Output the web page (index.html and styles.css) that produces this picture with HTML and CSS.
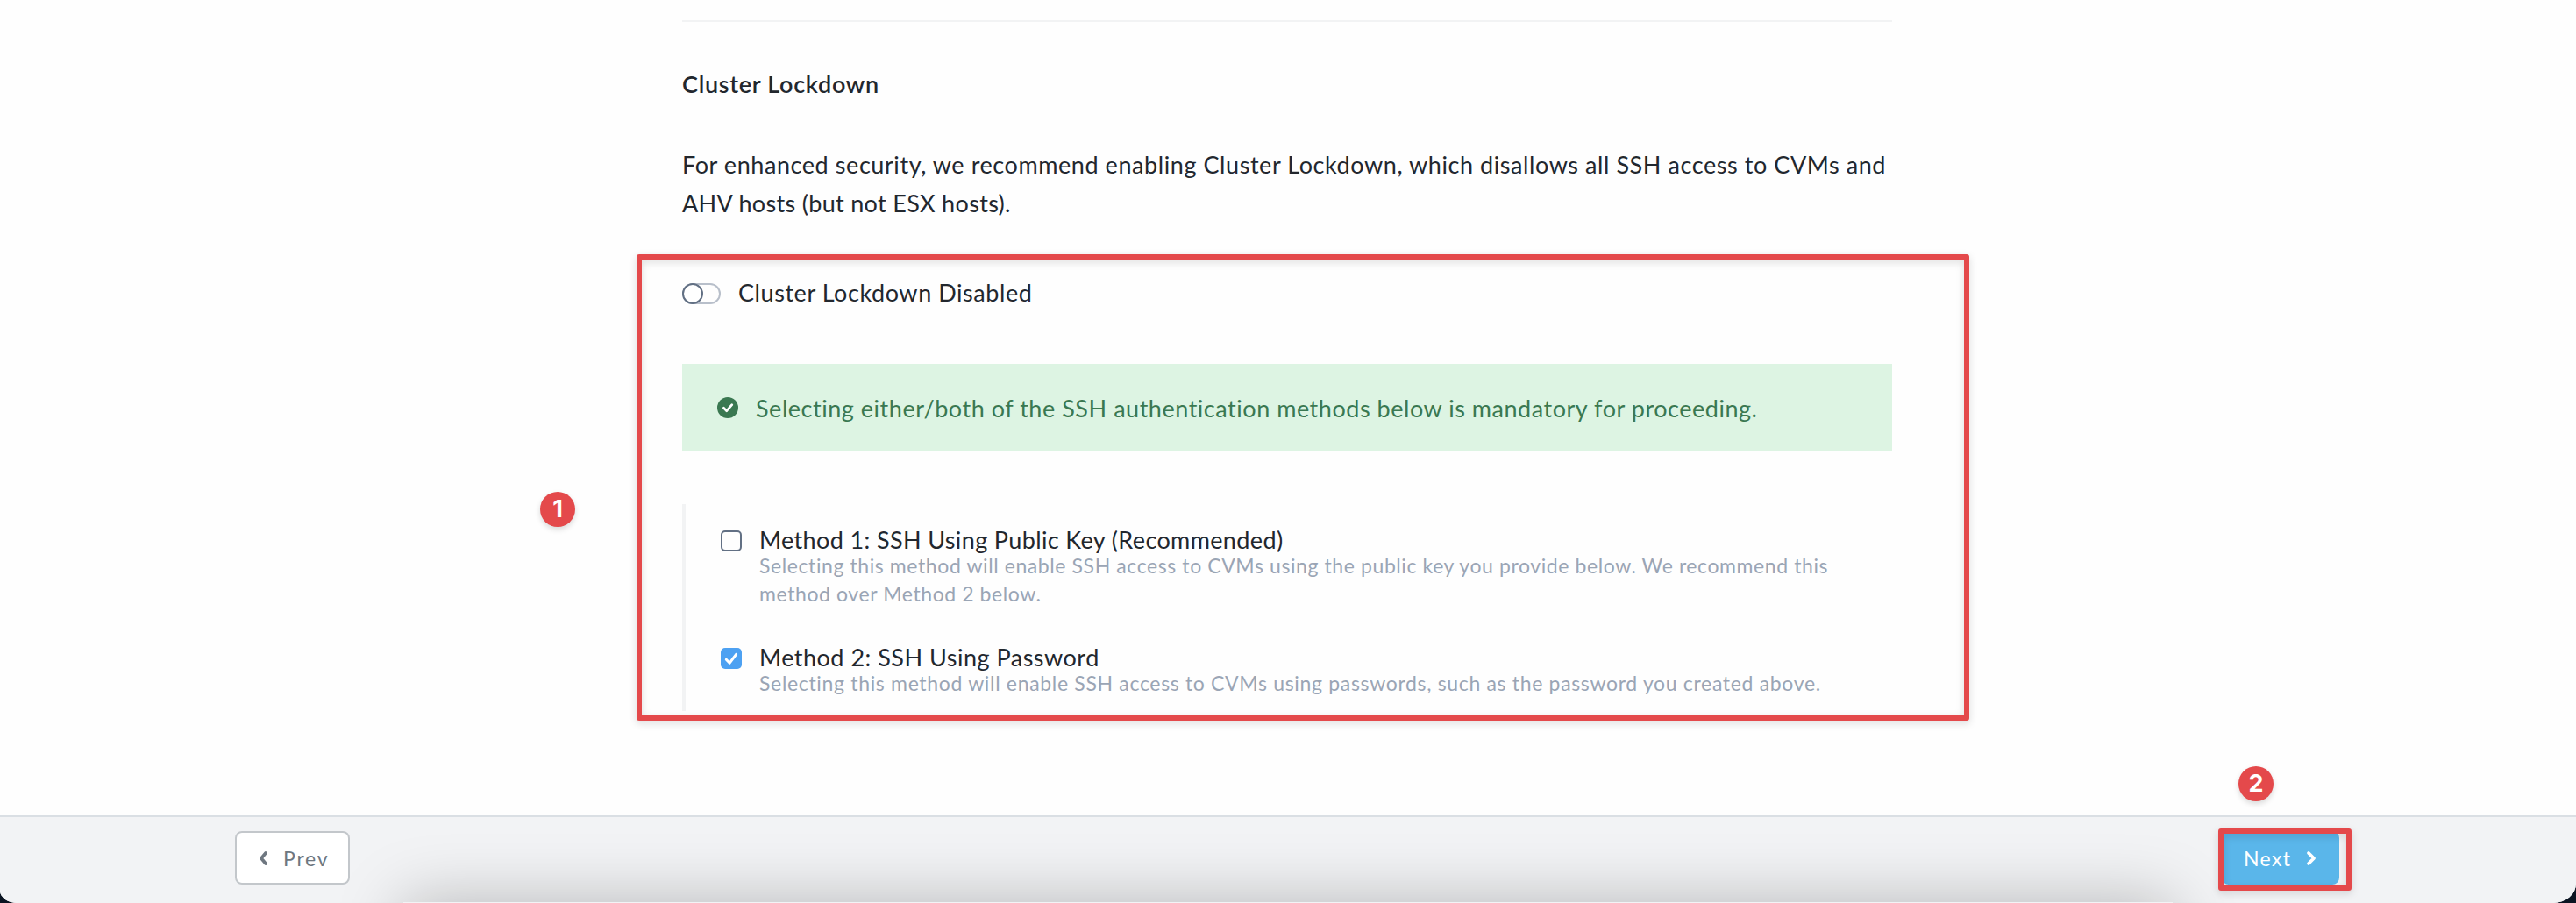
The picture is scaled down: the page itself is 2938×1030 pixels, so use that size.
FILE: index.html
```html
<!DOCTYPE html>
<html lang="en">
<head>
<meta charset="utf-8">
<title>Cluster Lockdown</title>
<link rel="stylesheet" href="styles.css">
</head>
<body>
<div class="window">
  <main class="content">
    <hr class="divider">
    <h2 class="title">Cluster Lockdown</h2>
    <p class="intro"><span>For enhanced security, we recommend enabling Cluster Lockdown, which disallows all SSH access to CVMs and</span><br><span class="intro-end">AHV hosts (but not ESX hosts).</span></p>
    <div class="toggle-row">
      <span class="toggle"><span class="knob"></span></span>
      <span class="toggle-label">Cluster Lockdown Disabled</span>
    </div>
    <div class="banner">
      <svg class="banner-icon" viewBox="0 0 24 24"><circle cx="12" cy="12" r="12" fill="#3a7851"/><path d="M7.4 12.2l3.4 3.5 6-7" fill="none" stroke="#fff" stroke-width="2.7" stroke-linecap="round" stroke-linejoin="round"/></svg>
      <span class="banner-text">Selecting either/both of the SSH authentication methods below is mandatory for proceeding.</span>
    </div>
    <div class="methods">
      <div class="method">
        <span class="checkbox"></span>
        <div class="method-body">
          <div class="method-title">Method 1: SSH Using Public Key (Recommended)</div>
          <div class="method-note">Selecting this method will enable SSH access to CVMs using the public key you provide below. We recommend this<br>method over Method 2 below.</div>
        </div>
      </div>
      <div class="method">
        <span class="checkbox checked"><svg viewBox="0 0 24 24"><path d="M6.3 13.2l3.9 4 7.4-9.9" fill="none" stroke="#fff" stroke-width="3" stroke-linecap="round" stroke-linejoin="round"/></svg></span>
        <div class="method-body">
          <div class="method-title title-wide">Method 2: SSH Using Password</div>
          <div class="method-note note-wide">Selecting this method will enable SSH access to CVMs using passwords, such as the password you created above.</div>
        </div>
      </div>
    </div>
  </main>
  <footer class="footer">
    <div class="button prev"><svg class="chevron" viewBox="0 0 12 18"><path d="M9 3L4 9l5 6" fill="none" stroke="currentColor" stroke-width="3.6" stroke-linecap="round" stroke-linejoin="round"/></svg><span class="prev-text">Prev</span></div>
    <div class="button next"><span class="next-text">Next</span><svg class="chevron" viewBox="0 0 12 18"><path d="M3 3l6 6-6 6" fill="none" stroke="currentColor" stroke-width="3.8" stroke-linecap="round" stroke-linejoin="round"/></svg></div>
  </footer>
</div>
<div class="mark mark-methods"></div>
<div class="mark mark-next"></div>
<div class="badge badge-one">1</div>
<div class="badge badge-two">2</div>
</body>
</html>
```
FILE: styles.css
```css
* { box-sizing: border-box; }

body {
  margin: 0;
  position: relative;
  height: 1030px;
  overflow: hidden;
  background: #0b1422;
  color: #22272e;
  font: 400 27px/44px Lato, sans-serif;
  font-variant-ligatures: none;
}

.window {
  display: flex;
  flex-direction: column;
  height: 1030px;
  overflow: hidden;
  background: #fefefe;
  border-radius: 0 0 26px 20px / 0 0 22px 14px;
}

.content {
  flex: 1;
  width: 1380px;
  margin-left: 778px;
  padding-top: 23px;
}

.divider {
  height: 2px;
  margin: 0;
  border: 0;
  background: #f2f3f4;
}

.title {
  margin: 49px 0 0;
  font-size: 27px;
  font-weight: 600;
  letter-spacing: 0.7px;
}

.intro {
  margin: 48px 0 0;
  white-space: nowrap;
  letter-spacing: 0.57px;
}

.intro-end { letter-spacing: 0.32px; }

.toggle-row {
  display: flex;
  align-items: center;
  gap: 20px;
  margin-top: 58px;
  letter-spacing: 0.56px;
}

.toggle {
  width: 44px;
  height: 24px;
  margin-top: 2px;
  border: 2px solid #b8bfca;
  border-radius: 12px;
}

.knob {
  display: block;
  width: 24px;
  height: 24px;
  margin: -2px;
  border: 2px solid #627084;
  border-radius: 50%;
  background: #fff;
}

.banner {
  display: flex;
  align-items: center;
  gap: 20px;
  height: 100px;
  margin-top: 59px;
  padding: 2px 0 0 40px;
  background: #ddf4e3;
  color: #3a7851;
  white-space: nowrap;
  letter-spacing: 0.53px;
}

.banner-icon {
  width: 24px;
  height: 24px;
  margin-top: -2px;
}

.methods {
  display: flex;
  flex-direction: column;
  gap: 44px;
  height: 236px;
  margin-top: 60px;
  padding: 28px 0 0 40px;
  border-left: 4px solid #f2f3f4;
}

.method {
  display: flex;
  gap: 20px;
}

.checkbox {
  width: 24px;
  height: 24px;
  margin-top: 2px;
  border: 2px solid #627084;
  border-radius: 5px;
}

.checkbox.checked {
  border: 0;
  background: #4da1f2;
}

.checkbox svg { display: block; }

.method-title {
  line-height: 26px;
  letter-spacing: 0.37px;
}

.title-wide { letter-spacing: 0.5px; }

.method-note {
  color: #9aa5b5;
  font-size: 23px;
  line-height: 32px;
  white-space: nowrap;
  letter-spacing: 0.59px;
}

.note-wide { letter-spacing: 0.67px; }

.footer {
  position: relative;
  display: flex;
  justify-content: space-between;
  height: 100px;
  padding: 16px 270px 0 268px;
  border-top: 2px solid #dadfe4;
  background: #f2f3f5;
  overflow: hidden;
}

.footer::after {
  content: "";
  position: absolute;
  top: 97px;
  left: 460px;
  right: 460px;
  height: 120px;
  box-shadow: 0 0 75px rgba(0, 0, 0, 0.25);
}

.button {
  display: flex;
  align-items: center;
  height: 61px;
  border-radius: 8px;
  font-size: 23px;
}

.prev {
  width: 131px;
  padding-left: 24px;
  gap: 17px;
  border: 2px solid #c3c7cb;
  background: #fff;
  color: #6e7780;
}

.next {
  width: 134px;
  padding-left: 25px;
  gap: 16px;
  background: #5ab6ea;
  color: #fff;
}

.prev-text { letter-spacing: 1.8px; }

.next-text { letter-spacing: 1.4px; }

.chevron {
  width: 12px;
  height: 18px;
}

.mark {
  position: absolute;
  border: 6px solid #e4494b;
  border-radius: 3px;
  filter: drop-shadow(0 3px 4px rgba(0, 0, 0, 0.15));
}

.mark-methods {
  left: 726px;
  top: 290px;
  width: 1520px;
  height: 532px;
}

.mark-next {
  left: 2530px;
  top: 945px;
  width: 152px;
  height: 71px;
}

.badge {
  position: absolute;
  width: 40px;
  height: 40px;
  border-radius: 50%;
  background: #e4494b;
  box-shadow: 0 3px 6px rgba(0, 0, 0, 0.15);
  color: #fff;
  font: 700 27px/40px Inter, sans-serif;
  text-align: center;
}

.badge-one {
  left: 616px;
  top: 561px;
}

.badge-two {
  left: 2553px;
  top: 874px;
}
```
